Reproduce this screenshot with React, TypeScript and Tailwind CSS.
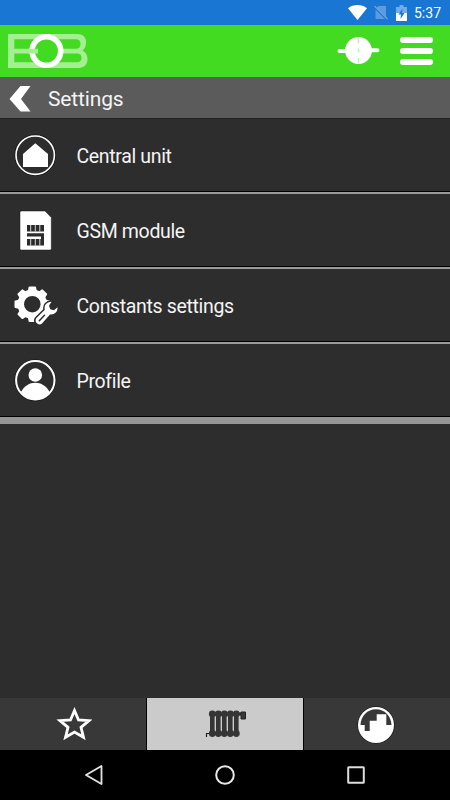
import type { ReactNode } from 'react';

const GEAR_TEETH = [0, 45, 90, 135, 180, 225, 270, 315];
const RADIATOR_RIBS = [9.3, 15.3, 21.3, 27.3, 33.3];

function StatusBar() {
  return (
    <div className="h-[25px] bg-[#1976d2] flex items-center justify-end pr-[9px] text-white">
      <svg className="w-[19px] h-[15px] mr-[7px]" viewBox="0 0 19 15">
        <path d="M0 3.2C5.4-1 13.6-1 19 3.2L9.5 15Z" fill="#fff" />
      </svg>
      <svg className="w-[14px] h-[15px] mr-2" viewBox="0 0 14 15">
        <path d="M4.5 1H12V12.5L2.5 3ZM1.5 4.5L11 14H1.5Z" fill="#5c9be0" />
        <path d="M.5 1L13.5 14" stroke="#6ba5e2" strokeWidth="1.3" />
      </svg>
      <svg className="w-[11px] h-[16px] mr-[7px]" viewBox="0 0 11 16">
        <path d="M3.5 0H7.5V2H11V8H0V2H3.5Z" fill="#75abe4" />
        <path d="M0 8H11V16H0Z" fill="#fff" />
        <path d="M6.5 3.5L2.5 9.5H5L4.5 14L8.5 8H6Z" fill="#1976d2" />
      </svg>
      <span className="text-[14px] leading-none">5:37</span>
    </div>
  );
}

function Logo() {
  return (
    <svg className="w-20 h-[34px]" viewBox="0 0 80 34">
      <path
        fillRule="evenodd"
        d="M0 0H69C75 0 78 3 78 8.5C78 12.5 76.5 15 74.5 16.5C77.5 18 79.5 21 79.5 25C79.5 30.5 76 34 71 34H0ZM6.3 5.3V14.8H68C71 14.8 72.5 13 72.5 10C72.5 7 71 5.3 68 5.3ZM6.3 19.5V28.3H69C72 28.3 73.5 26.5 73.5 24C73.5 21.2 72 19.5 69 19.5Z"
        fill="#a4ef91"
      />
      <circle cx="38.4" cy="17" r="14.3" fill="#43da22" stroke="#fff" strokeWidth="5.6" />
      <path d="M20 14.8H30V19.5H20Z" fill="#a4ef91" />
    </svg>
  );
}

function Header() {
  return (
    <div className="h-[52px] bg-[#43da22] flex items-center justify-between pl-2 pr-[17px]">
      <Logo />
      <div className="flex items-center gap-5">
        <svg className="w-[43px] h-[28px]" viewBox="0 0 43 28">
          <path d="M2.5 14H10M34 13.2H40.5" stroke="#fff" strokeWidth="4" strokeLinecap="round" />
          <circle cx="21.5" cy="13.5" r="13.4" fill="#fff" />
          <path d="M21.5 .5V6M21.5 11.5V15.5M21.5 21V26.5" stroke="#bdf2b0" strokeWidth="1.5" />
        </svg>
        <div className="w-[33px] flex flex-col gap-[5px]">
          <div className="h-1.5 rounded-full bg-white" />
          <div className="h-1.5 rounded-full bg-white" />
          <div className="h-1.5 rounded-full bg-white" />
        </div>
      </div>
    </div>
  );
}

function HouseIcon() {
  return (
    <svg className="w-[45px] h-[45px]" viewBox="0 0 45 45">
      <circle cx="22.2" cy="22.2" r="20.4" fill="none" stroke="#181818" strokeWidth="1" />
      <circle cx="22.2" cy="22.2" r="19.2" fill="none" stroke="#fff" strokeWidth="1.6" />
      <path d="M22.3 10.3L35 21V34H10V21Z" fill="#fff" />
    </svg>
  );
}

function SimIcon() {
  return (
    <svg className="w-[45px] h-[45px]" viewBox="0 0 45 45">
      <path d="M8.5 3H32L38.3 9.5V40.5Q38.3 42 36.8 42H8.5Q7 42 7 40.5V4.5Q7 3 8.5 3Z" fill="#fff" stroke="#181818" strokeWidth=".5" />
      <path d="M14 17H31V23.5H14ZM14 25.3H31V28.5H14ZM14 31H31V37.5H14ZM28 25.3H31V37.5H28Z" fill="#2b2b2b" />
      <path d="M17.7 17V23.5M22.3 17V23.5M26.8 17V23.5M17.7 31V37.5M22.3 31V37.5M26.8 30V37.5" stroke="#fff" strokeWidth=".8" />
    </svg>
  );
}

function GearIcon() {
  return (
    <svg className="w-[45px] h-[45px]" viewBox="0 0 45 45">
      {GEAR_TEETH.map((angle) => (
        <path
          key={angle}
          d="M15.5 9L16.5 4.3H22.1L23.1 9Z"
          fill="#fff"
          stroke="#fff"
          strokeWidth="1.8"
          strokeLinejoin="round"
          transform={`rotate(${angle} 19.3 21.2)`}
        />
      ))}
      <circle cx="19.3" cy="21.2" r="11.5" fill="none" stroke="#fff" strokeWidth="6.4" />
      {/* Wrench, with a dark edge that separates it from the gear */}
      <path
        d="M38.5 18.8C33.5 19 30.8 22.5 31.8 26.7L23.5 35C20.5 38.5 25.5 43.5 29 40.5L37 31.5C41.5 32 44.8 29 44.5 24.3L41 27.2L37.3 26.3L36 22.8Z"
        fill="#fff"
        stroke="#2d2d2d"
        strokeWidth="3"
        paintOrder="stroke"
        strokeLinejoin="round"
      />
      <path d="M26.3 37.7L31.5 32.3" stroke="#2d2d2d" strokeWidth="1.5" strokeLinecap="round" />
    </svg>
  );
}

function ProfileIcon() {
  return (
    <svg className="w-[45px] h-[45px]" viewBox="0 0 45 45">
      <circle cx="22.3" cy="22.3" r="20.5" fill="none" stroke="#181818" strokeWidth="1" />
      <circle cx="22.3" cy="22.3" r="19.2" fill="none" stroke="#fff" strokeWidth="2" />
      <circle cx="22.3" cy="17" r="6.8" fill="#fff" />
      <path d="M8 34C11 28 16.5 24.7 22.3 24.7S33.6 28 36.6 34C33 39 28 41.5 22.3 41.5S11.6 39 8 34Z" fill="#fff" />
    </svg>
  );
}

function MenuRow({ icon, label, last }: { icon: ReactNode; label: string; last?: boolean }) {
  return (
    <div className={last ? 'border-b-[7px] border-[#969696]' : 'border-b-2 border-[#9a9a9a]'}>
      <div className="h-[73px] pt-px pl-[13px] flex items-center gap-[18.5px] bg-[#2d2d2d] border-b border-black">
        {icon}
        <span className="mt-0.5 text-[19.5px] leading-none tracking-[-0.34px] text-[#f4f4f4]">{label}</span>
      </div>
    </div>
  );
}

function TabBar() {
  return (
    <div className="h-[52px] flex bg-[#383838]">
      <div className="w-[147px] pl-px flex items-center justify-center border-r border-black">
        <svg className="w-[36px] h-[34px]" viewBox="0 0 36 34">
          <path d="M18.5 3.5L22.5 13L33 13.7L25 20.3L27.5 30.3L18.5 25L9.5 30.3L12 20.3L4 13.7L14.5 13Z" fill="none" stroke="#fff" strokeWidth="2.8" />
        </svg>
      </div>
      <div className="w-[156px] flex items-center justify-center bg-[#cbcbcb]">
        <svg className="w-[44px] h-[30px]" viewBox="0 0 44 30">
          <path d="M7 5H38" stroke="#303030" strokeWidth="3" />
          <path d="M38 3H42.5V10H38Z" fill="#383838" stroke="#222" />
          {RADIATOR_RIBS.map((x) => (
            <g key={x} fill="#353535">
              <path d={`M${x - 2.3} 4H${x + 2.3}V25H${x - 2.3}Z`} />
              <circle cx={x} cy="5" r="3.4" />
              <circle cx={x} cy="24.5" r="3.4" />
            </g>
          ))}
          <path d="M6 24.5H3.5V28" fill="none" stroke="#222" strokeWidth="1.2" />
        </svg>
      </div>
      <div className="flex-1 pt-px pr-0.5 flex items-center justify-center border-l border-black">
        <svg className="w-[38px] h-[38px]" viewBox="-19 -19 38 38">
          <circle r="18.7" fill="#1c1c1c" />
          <circle r="18" fill="#fff" />
          <path d="M-15.5 0C-15.2-9-8.5-15.7 0-15.7S15.2-9 15.5 0H10.3V-10.7H.7V-4.3H-6.3V6H-11.3V0Z" fill="#383838" />
        </svg>
      </div>
    </div>
  );
}

function NavBar() {
  return (
    <div className="h-[50px] bg-black flex items-center justify-center gap-[107px]">
      <svg className="w-6 h-6" viewBox="0 0 24 24">
        <path d="M19.5 3V21L4 12Z" fill="none" stroke="#e3e3e3" strokeWidth="1.8" strokeLinejoin="round" />
      </svg>
      <svg className="w-6 h-6" viewBox="0 0 24 24">
        <circle cx="12" cy="12" r="8.8" fill="none" stroke="#e8e8e8" strokeWidth="2" />
      </svg>
      <svg className="w-6 h-6" viewBox="0 0 24 24">
        <rect x="4.2" y="4.2" width="15.6" height="15.6" rx=".5" fill="none" stroke="#ddd" strokeWidth="2" />
      </svg>
    </div>
  );
}

export default function App() {
  return (
    <div className="w-[450px] h-[800px] flex flex-col bg-[#2d2d2d] overflow-hidden font-[Roboto,sans-serif]">
      <StatusBar />
      <Header />
      <div className="h-[42px] pt-0.5 pl-[9px] flex items-center gap-[17px] bg-[#5b5b5b] border-b border-[#222]">
        <svg className="w-[22px] h-[26px]" viewBox="0 0 22 26">
          <path d="M11.5 0H21.5L12 13L21.5 25.5H11.5L.5 13Z" fill="#fff" />
        </svg>
        <h1 className="mt-0.5 text-[21px] leading-none tracking-[-0.15px] text-[#f4f4f4]">Settings</h1>
      </div>
      <div className="flex-1">
        <MenuRow icon={<HouseIcon />} label="Central unit" />
        <MenuRow icon={<SimIcon />} label="GSM module" />
        <MenuRow icon={<GearIcon />} label="Constants settings" />
        <MenuRow icon={<ProfileIcon />} label="Profile" last />
      </div>
      <TabBar />
      <NavBar />
    </div>
  );
}
